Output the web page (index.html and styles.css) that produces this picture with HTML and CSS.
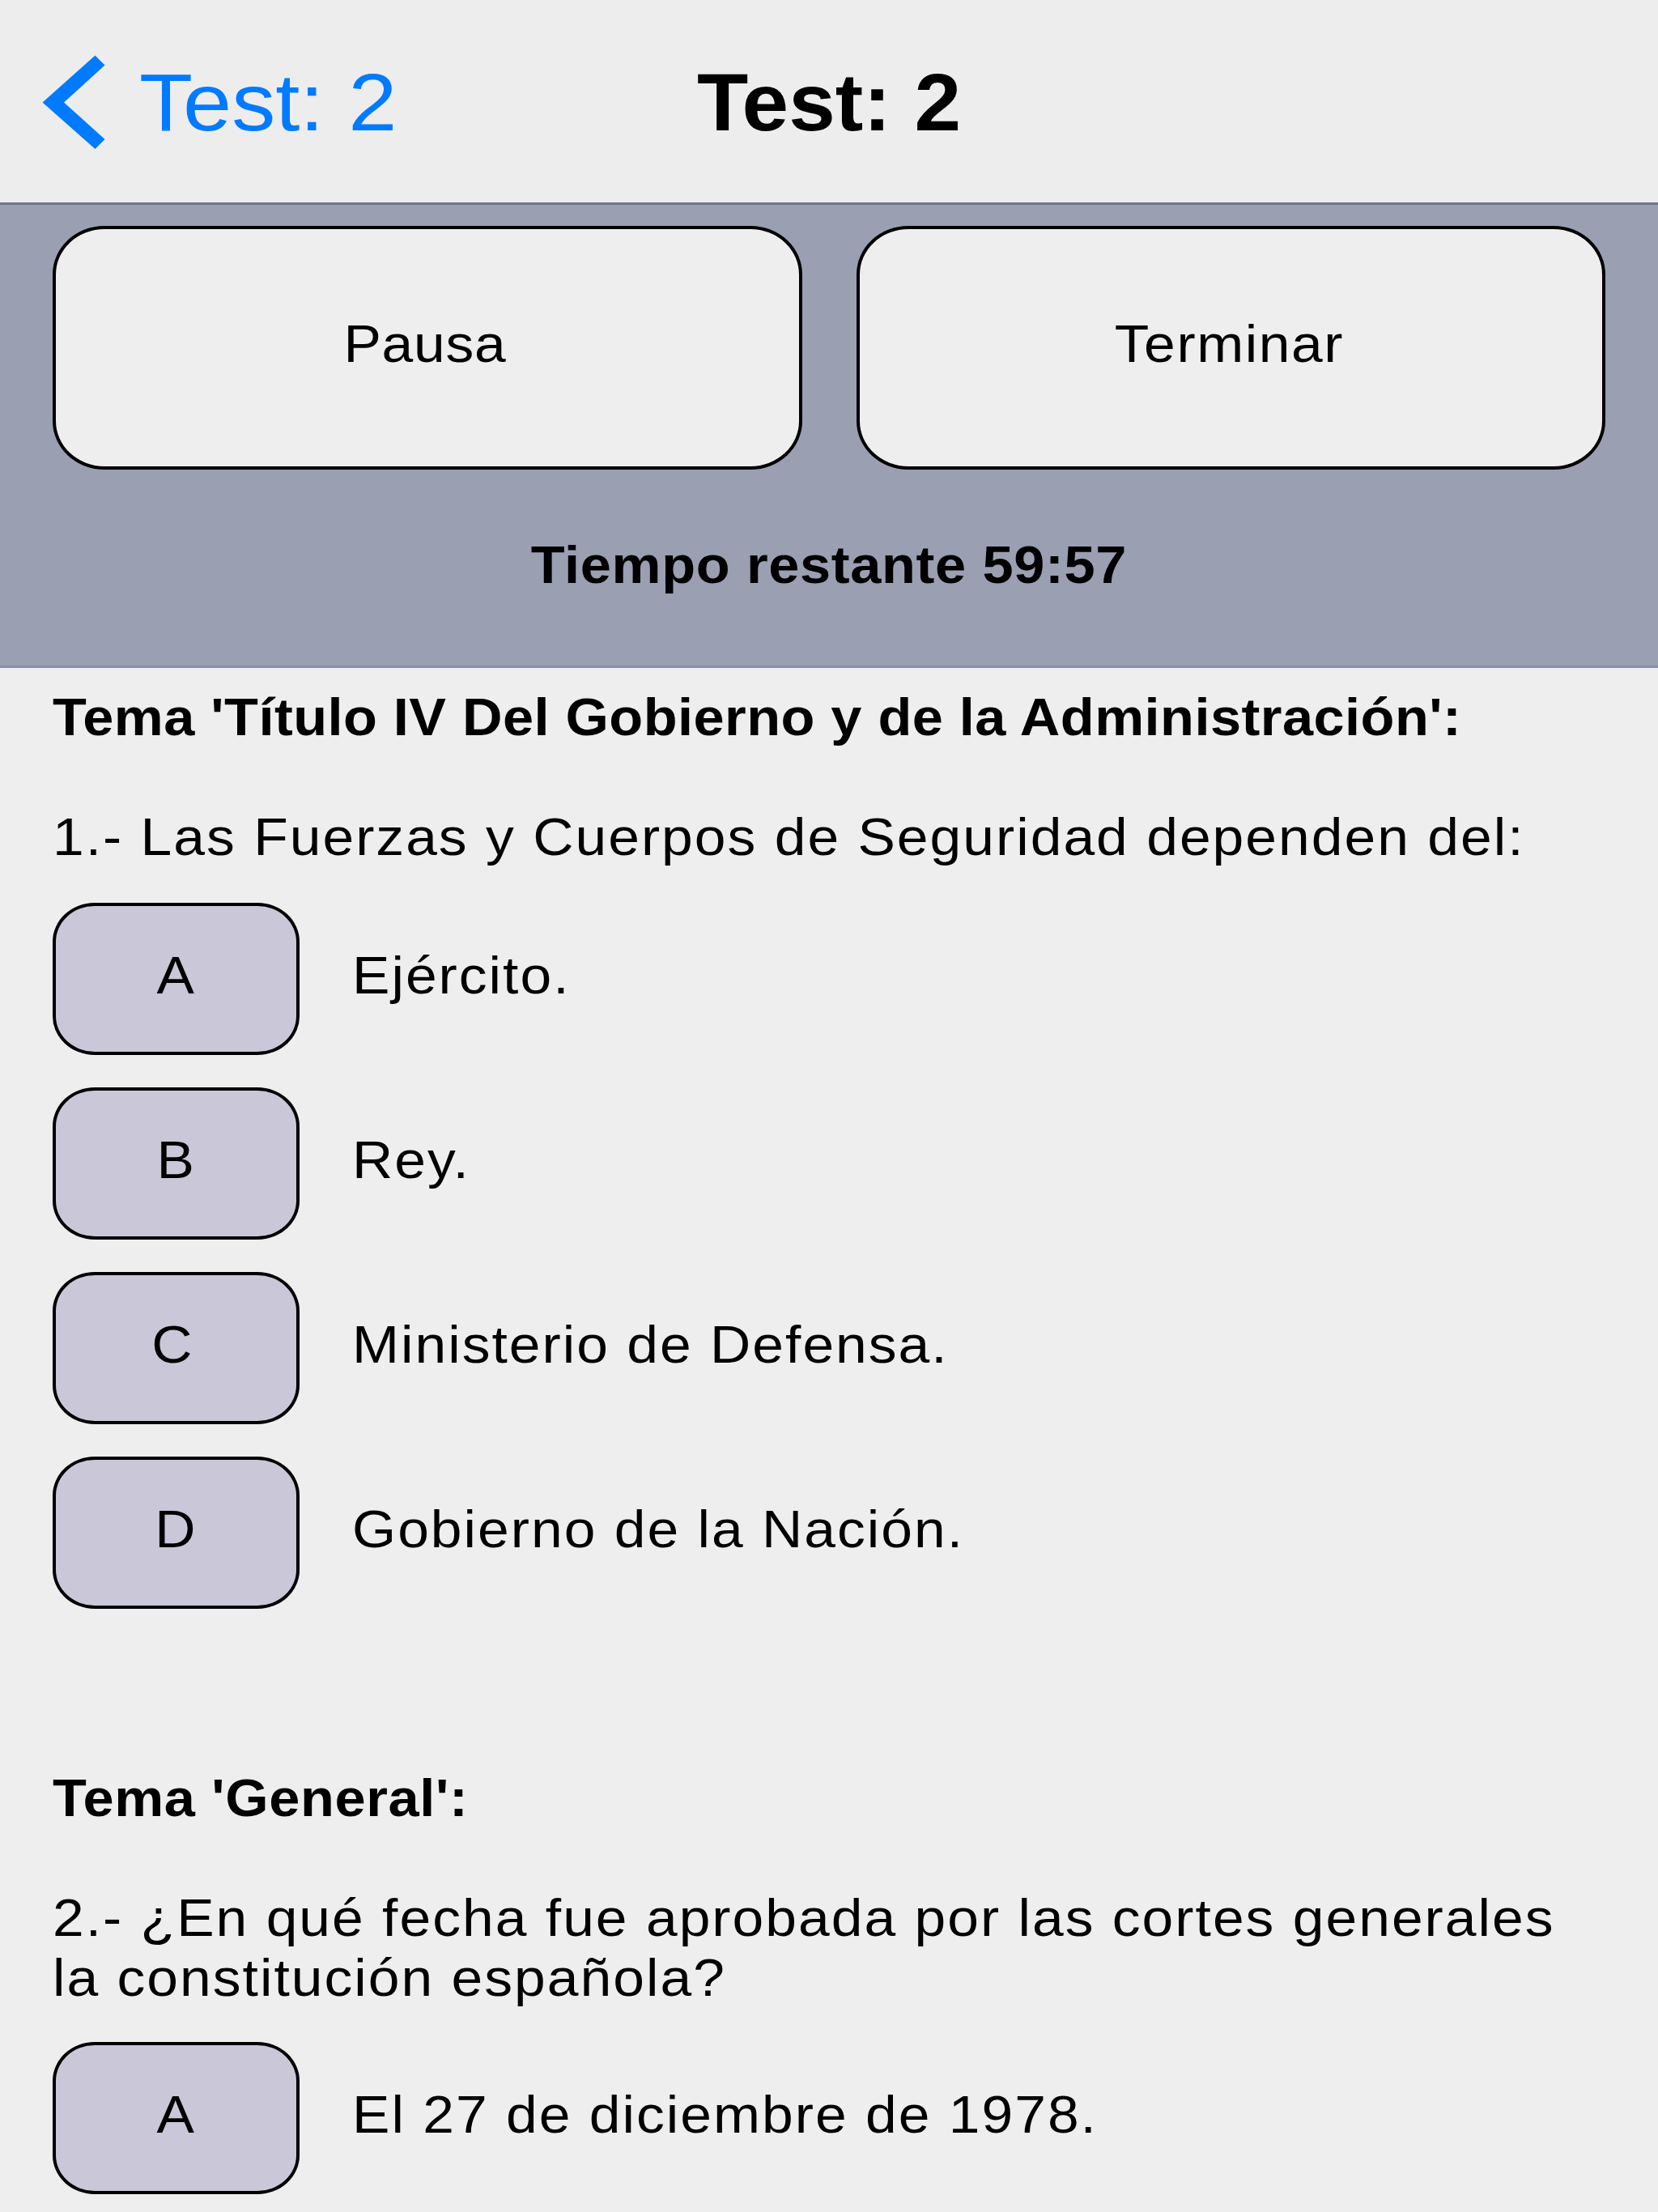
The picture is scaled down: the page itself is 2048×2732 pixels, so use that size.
FILE: index.html
```html
<!DOCTYPE html>
<html lang="es">
<head>
<meta charset="utf-8">
<title>Test: 2</title>
<link rel="stylesheet" href="styles.css">
</head>
<body>
<header class="navbar">
  <a class="back">
    <svg class="chevron" viewBox="0 0 78 118" width="78" height="118"><path d="M65.500 1.500L0.500 59.500L65.500 117L77.500 105L27 59.500L77.500 13.500Z" fill="#007aff"/></svg>
    <span class="back-label">Test: 2</span>
  </a>
  <h1 class="title">Test: 2</h1>
</header>
<section class="panel">
  <div class="actions">
    <button class="action action-pause"><span class="label">Pausa</span></button>
    <button class="action"><span class="label">Terminar</span></button>
  </div>
  <p class="timer"><span class="label">Tiempo restante 59:57</span></p>
</section>
<main class="quiz">
  <section class="question">
    <h2 class="topic"><span class="text">Tema 'Título IV Del Gobierno y de la Administración':</span></h2>
    <p class="prompt"><span class="text">1.- Las Fuerzas y Cuerpos de Seguridad dependen del:</span></p>
    <ul class="options">
      <li class="option"><button class="key"><span class="label">A</span></button><span class="text">Ejército.</span></li>
      <li class="option"><button class="key"><span class="label">B</span></button><span class="text">Rey.</span></li>
      <li class="option"><button class="key key-c"><span class="label">C</span></button><span class="text">Ministerio de Defensa.</span></li>
      <li class="option"><button class="key"><span class="label">D</span></button><span class="text">Gobierno de la Nación.</span></li>
    </ul>
  </section>
  <section class="question">
    <h2 class="topic"><span class="text">Tema 'General':</span></h2>
    <p class="prompt"><span class="text">2.- ¿En qué fecha fue aprobada por las cortes generales<br>la constitución española?</span></p>
    <ul class="options">
      <li class="option"><button class="key"><span class="label">A</span></button><span class="text">El 27 de diciembre de 1978.</span></li>
    </ul>
  </section>
</main>
</body>
</html>
```

FILE: styles.css
```css
* { box-sizing: border-box; margin: 0; padding: 0; }
html, body { width: 2048px; height: 2732px; overflow: hidden; }
body { background: #eee; color: #000; font: 65px/74px "Liberation Sans", Arial, sans-serif; letter-spacing: 1.9px; }

.navbar { height: 253px; background: #ededed; border-bottom: 3px solid #6f7688; padding-top: 2px; display: grid; grid-template-columns: 1fr auto 1fr; align-items: center; font-size: 101px; line-height: 114px; letter-spacing: 0; white-space: nowrap; }
.back { display: flex; align-items: center; padding-left: 52px; gap: 42px; color: #007aff; }
.chevron { display: block; }
.back-label { transform: scaleX(1.07); transform-origin: left; }
.title { font-size: inherit; font-weight: bold; transform: scaleX(1.025); }

.panel { height: 572px; background: #9a9fb2; border-bottom: 3px solid #8791a7; padding: 26px 65px 0; }
.actions { display: grid; grid-template-columns: 1fr 1fr; gap: 67px; }
.action { height: 301px; background: #eee; border: 4px solid #000; border-radius: 64px / 60px; font: inherit; letter-spacing: 1.5px; padding: 0 3px 9px 0; }
.action-pause { letter-spacing: 0.7px; padding-right: 6px; }
.timer { margin-top: 81px; text-align: center; font-weight: bold; letter-spacing: 0.6px; }
.label { display: inline-block; transform: scaleX(1.07); white-space: nowrap; }
.text { display: inline-block; transform: scaleX(1.07); transform-origin: left; white-space: nowrap; }
.timer .label, .topic .text { transform: scaleX(1.055); }

.quiz { padding: 24px 65px 0; }
.question + .question { margin-top: 197px; }
.topic { font-size: inherit; letter-spacing: 0.42px; margin-bottom: 74px; }
.question + .question .topic { letter-spacing: 0.6px; }
.options { list-style: none; margin-top: 44px; display: flex; flex-direction: column; gap: 40px; letter-spacing: 1.9px; }
.question + .question .options { margin-top: 42px; }
.option { display: flex; align-items: center; gap: 65px; }
.key { width: 305px; height: 188px; background: #c9c7d8; border: 4px solid #000; border-radius: 52px / 48px; font: inherit; letter-spacing: 0; padding: 0 2px 8px 0; }
.key-c { padding-right: 10px; }
.option > .text { padding-bottom: 9px; }
```
